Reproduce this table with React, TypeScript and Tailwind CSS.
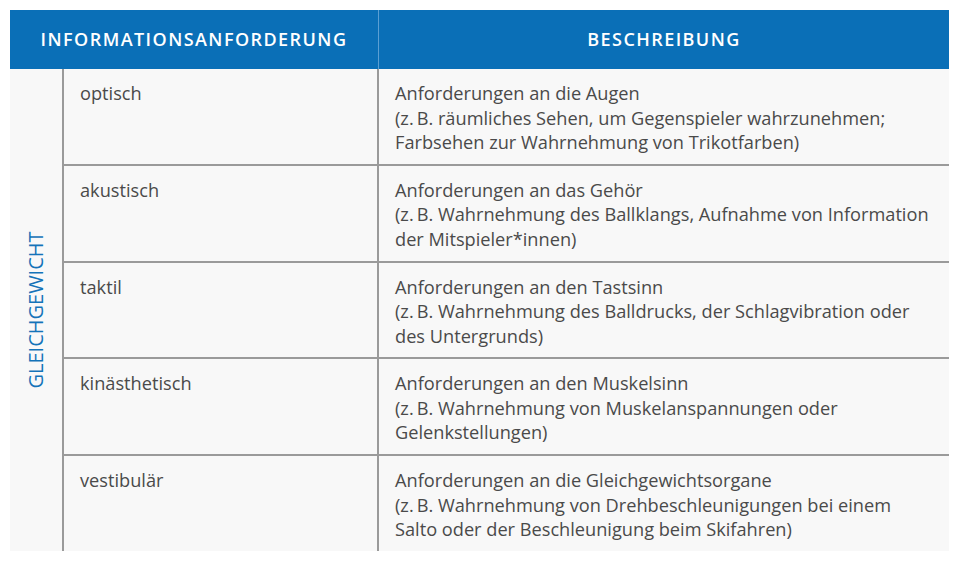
const rows = [
  {
    name: "optisch",
    lines: [
      "Anforderungen an die Augen",
      "(z.\u2009B. räumliches Sehen, um Gegenspieler wahrzunehmen;",
      "Farbsehen zur Wahrnehmung von Trikotfarben)",
    ],
  },
  {
    name: "akustisch",
    lines: [
      "Anforderungen an das Gehör",
      "(z.\u2009B. Wahrnehmung des Ballklangs, Aufnahme von Information",
      "der Mitspieler*innen)",
    ],
  },
  {
    name: "taktil",
    lines: [
      "Anforderungen an den Tastsinn",
      "(z.\u2009B. Wahrnehmung des Balldrucks, der Schlagvibration oder",
      "des Untergrunds)",
    ],
  },
  {
    name: "kinästhetisch",
    lines: [
      "Anforderungen an den Muskelsinn",
      "(z.\u2009B. Wahrnehmung von Muskelanspannungen oder",
      "Gelenkstellungen)",
    ],
  },
  {
    name: "vestibulär",
    lines: [
      "Anforderungen an die Gleichgewichtsorgane",
      "(z.\u2009B. Wahrnehmung von Drehbeschleunigungen bei einem",
      "Salto oder der Beschleunigung beim Skifahren)",
    ],
  },
];

export default function App() {
  return (
    <div
      className="w-[960px] h-[561px] bg-white pt-[10px] pl-[10px]"
      style={{ fontFamily: "'Open Sans', 'Noto Sans', sans-serif" }}
    >
      <div className="w-[939px]">
        {/* Header */}
        <div className="flex h-[59px] bg-[#0a6fb7] text-white font-semibold tracking-[0.08em] text-[18px]">
          <div className="w-[369px] flex items-center justify-center border-r border-[#5b9fd3]">
            INFORMATIONSANFORDERUNG
          </div>
          <div className="flex-1 flex items-center justify-center">BESCHREIBUNG</div>
        </div>

        {/* Body */}
        <div className="flex bg-[#f8f8f8] h-[482px]">
          <div className="w-[54px] border-r-2 border-[#9a9a9a] flex items-center justify-center">
            <span className="-rotate-90 whitespace-nowrap text-[#1473b9] text-[20px]">
              GLEICHGEWICHT
            </span>
          </div>
          <div className="flex-1 flex flex-col">
            {rows.map((row, i) => (
              <div
                key={row.name}
                className={`flex flex-1 text-[18.2px] leading-[24.5px] text-[#4a4a4a] ${
                  i > 0 ? "border-t-2 border-[#9a9a9a]" : ""
                }`}
              >
                <div className="w-[315px] pl-[16px] pt-[12px] border-r-2 border-[#9a9a9a]">
                  {row.name}
                </div>
                <div className="flex-1 pl-[16px] pt-[12px]">
                  {row.lines.map((l) => (
                    <div key={l}>{l}</div>
                  ))}
                </div>
              </div>
            ))}
          </div>
        </div>
      </div>
    </div>
  );
}
